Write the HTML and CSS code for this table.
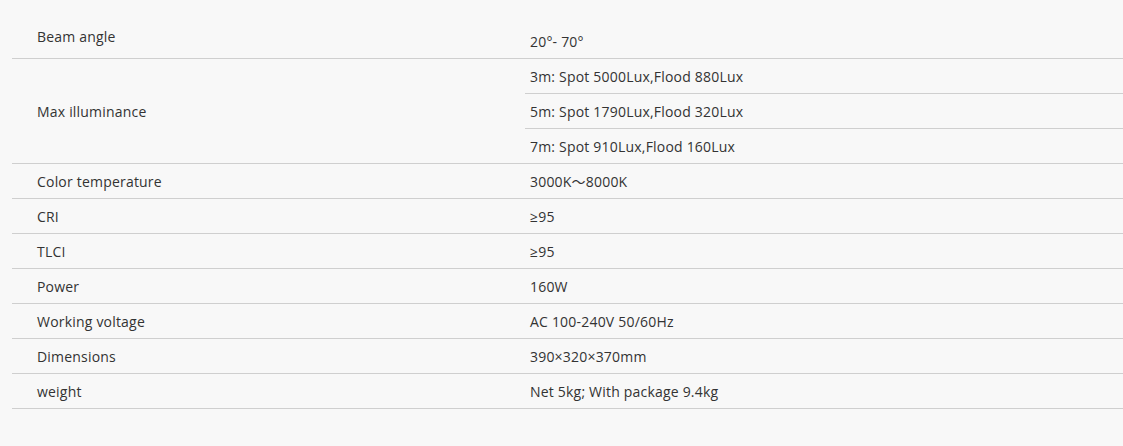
FILE: index.html
```html
<!DOCTYPE html>
<html>
<head>
<meta charset="utf-8">
<link rel="stylesheet" href="styles.css">
</head>
<body>
<div class="spec">
  <div class="row first">
    <div class="label">Beam angle</div>
    <div class="value">20°- 70°</div>
  </div>
  <div class="row">
    <div class="label">Max illuminance</div>
    <div class="value multi">
      <div class="sub">3m: Spot 5000Lux,Flood 880Lux</div>
      <div class="sub">5m: Spot 1790Lux,Flood 320Lux</div>
      <div class="sub">7m: Spot 910Lux,Flood 160Lux</div>
    </div>
  </div>
  <div class="row">
    <div class="label">Color temperature</div>
    <div class="value">3000K～8000K</div>
  </div>
  <div class="row">
    <div class="label">CRI</div>
    <div class="value">≥95</div>
  </div>
  <div class="row">
    <div class="label">TLCI</div>
    <div class="value">≥95</div>
  </div>
  <div class="row">
    <div class="label">Power</div>
    <div class="value">160W</div>
  </div>
  <div class="row">
    <div class="label">Working voltage</div>
    <div class="value">AC 100-240V 50/60Hz</div>
  </div>
  <div class="row">
    <div class="label">Dimensions</div>
    <div class="value">390×320×370mm</div>
  </div>
  <div class="row">
    <div class="label">weight</div>
    <div class="value">Net 5kg; With package 9.4kg</div>
  </div>
</div>
</body>
</html>
```
FILE: styles.css
```css
html, body {
  margin: 0;
  padding: 0;
  background: #f8f8f8;
}
body {
  font-family: "Open Sans", "Noto Sans", "Noto Sans CJK SC", sans-serif;
  font-size: 14px;
  letter-spacing: 0.2px;
  color: #333;
}
.spec {
  padding-top: 24px;
  margin-left: 12px;
}
.row {
  display: grid;
  grid-template-columns: 513px 1fr;
  border-bottom: 1px solid #cfcfcf;
  align-items: center;
}
.label {
  padding-left: 25px;
  padding-top: 2px;
  line-height: 20px;
}
.value {
  line-height: 20px;
  padding: 8px 0 6px 5px;
}
.first .label {
  padding-bottom: 10px;
}
.value.multi {
  padding: 0;
}
.sub {
  line-height: 20px;
  padding: 8px 0 6px 5px;
  border-bottom: 1px solid #cfcfcf;
}
.sub:last-child {
  border-bottom: none;
}
```
